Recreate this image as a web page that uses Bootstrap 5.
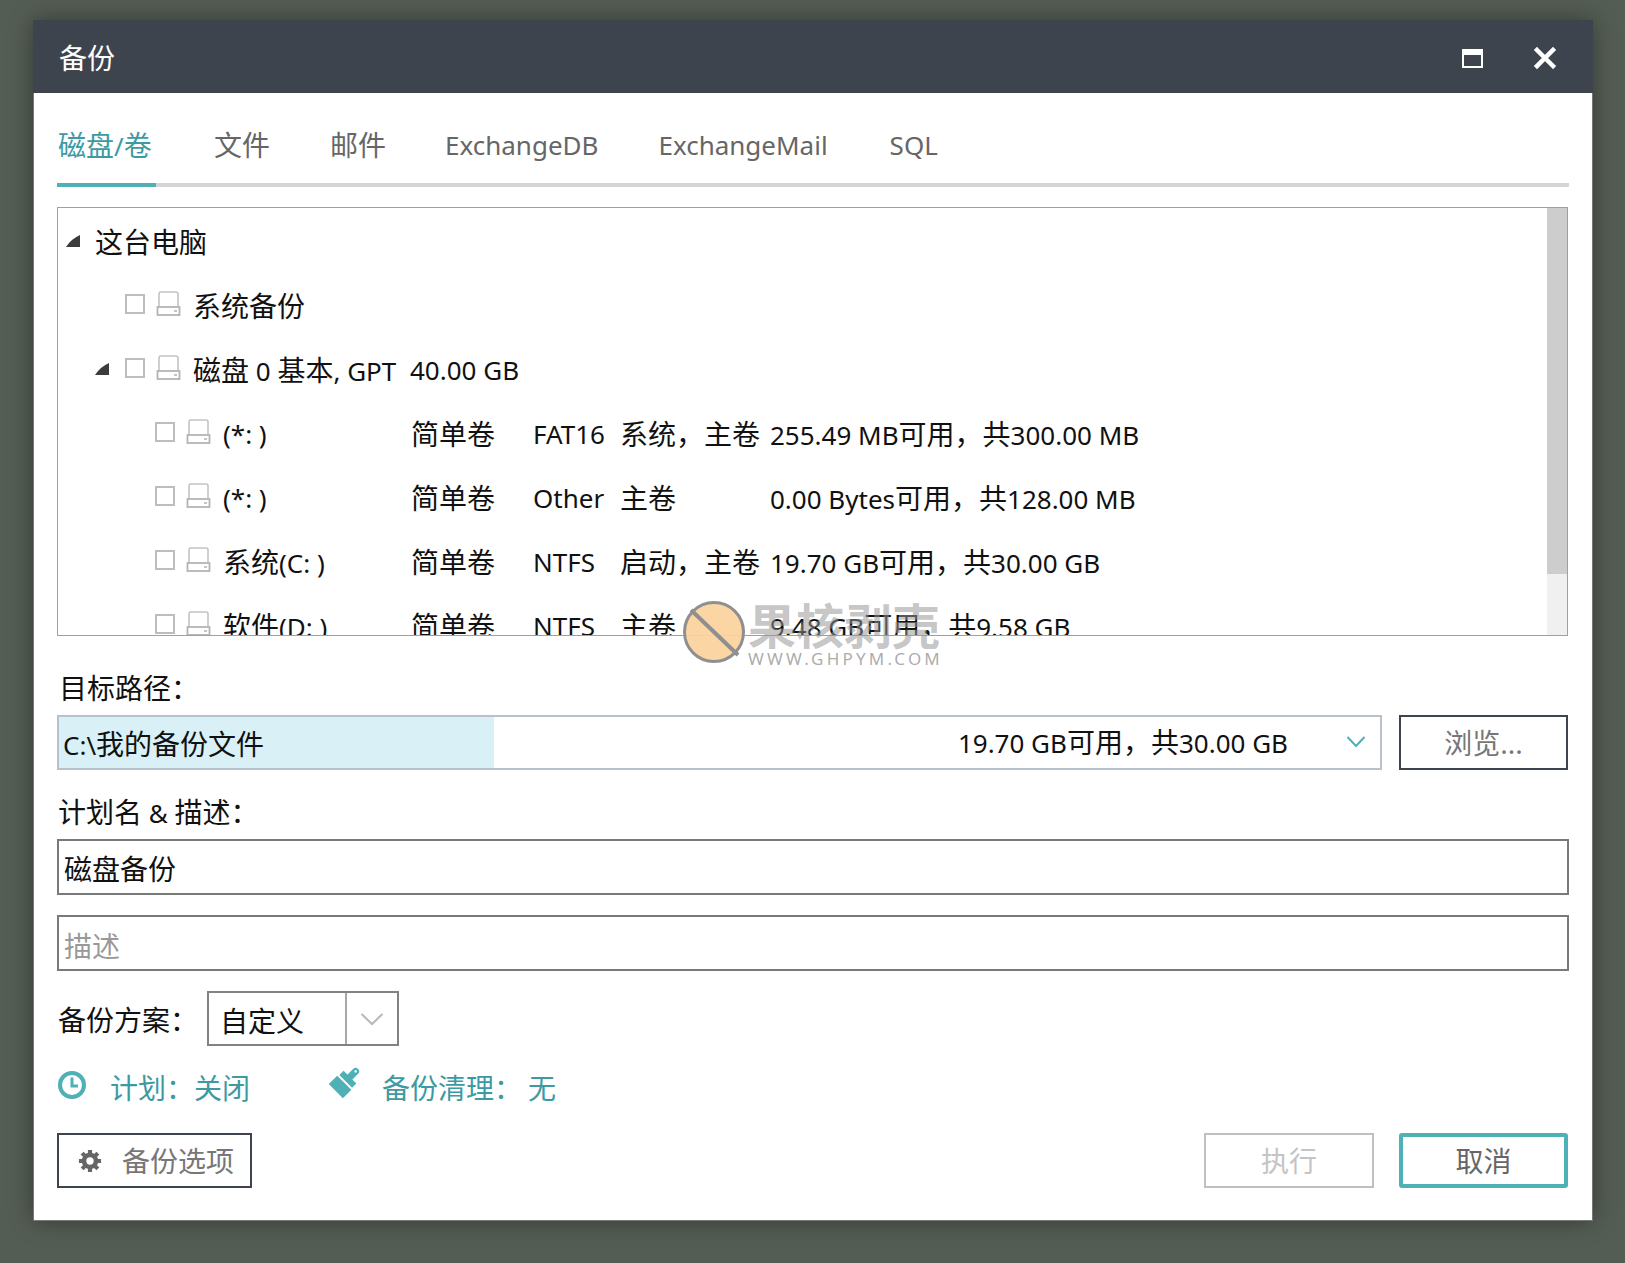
<!DOCTYPE html>
<html lang="zh-CN">
<head>
    <meta charset="UTF-8">
    <meta name="viewport" content="width=device-width, initial-scale=1.0">
    <title>备份</title>
    <link href="https://cdn.jsdelivr.net/npm/bootstrap@5.3.0/dist/css/bootstrap.min.css" rel="stylesheet">
    <style>
        html, body { height: 1263px; overflow: hidden; }
        body {
            background: #545d53;
            font-family: "Noto Sans", "Noto Sans CJK SC", sans-serif;
            font-size: 26px;
            color: #111;
            padding: 20px 0 0 33px;
        }
        .zh { font-size: 28px; }
        .bk-window {
            width: 1560px;
            height: 1201px;
            background: #fff;
            box-shadow: 0 0 22px rgba(0, 0, 0, .38);
        }
        .bk-title { height: 73px; background: #3d444d; color: #fff; padding: 3px 32px 0 26px; }
        .bk-title-btn { width: 32px; height: 32px; margin-left: 40px; }
        .bk-content { padding: 0 25px 0 24px; box-shadow: inset 1px 0 #777, inset -1px 0 #777, inset 0 -1px #777; }
        .bk-tabs { height: 94px; border-bottom: 4px solid #d5d5d5; margin-right: -1px; flex-wrap: nowrap; }
        .bk-tabs .nav-link {
            color: #666;
            padding: 0 1px;
            height: 94px;
            line-height: 104px;
            margin-right: 60px;
            white-space: nowrap;
        }
        .bk-tabs .nav-link.bk-tab-zh { margin-right: 57px; }
        .bk-tabs .nav-link.active { color: #3d9aa3; border-bottom: 4px solid #4fb0b5; width: 99px; margin-right: 57px; }
        .bk-tabs li:nth-child(2) .nav-link.bk-tab-zh { margin-right: 58px; }
        .bk-tabs li:nth-child(4) .nav-link { margin-right: 58px; }
        .bk-tree { height: 429px; margin-top: 20px; border: 1px solid #a0a0a0; overflow: hidden; }
        .bk-tree-list { min-width: 0; }
        .bk-scroll { width: 20px; background: #f0f0f0; }
        .bk-thumb { height: 366px; background: #cdcdcd; }
        .bk-row { height: 64px; white-space: nowrap; }
        .bk-row:first-child { margin-top: 2px; }
        .bk-arrow { width: 16px; height: 16px; flex: none; margin-top: -3px; }
        .bk-check.form-check-input {
            width: 20px; height: 20px; margin: -4px 0 0; flex: none;
            border: 2px solid #bdbdbd; border-radius: 0;
        }
        .bk-drive { width: 25px; height: 25px; flex: none; margin: -5px 12px 0 11px; }
        .bk-l0 { padding-left: 7px; }
        .bk-l0 .zh { margin-left: 14px; }
        .bk-l1 { padding-left: 67px; }
        .bk-l1b { padding-left: 36px; }
        .bk-l2 { padding-left: 97px; }
        .bk-gap1 { width: 15px; flex: none; }
        .bk-name { width: 188px; flex: none; }
        .bk-type { width: 122px; flex: none; }
        .bk-fs { width: 87px; flex: none; }
        .bk-flags { width: 150px; flex: none; }
        .bk-diskname { width: 217px; flex: none; }
        .bk-label { height: 79px; padding: 0 0 6px 2px; }
        .bk-label2 { height: 69px; padding: 0 0 6px 1px; }
        .bk-select { height: 55px; width: 1325px; border: 2px solid #b9c2cb; }
        .bk-select-hl { width: 435px; height: 100%; background: #d8f0f6; padding-left: 4px; line-height: 55px; }
        .bk-select-free { flex: 1; text-align: right; padding-right: 92px; line-height: 55px; }
        .bk-select-arrow { position: relative; width: 0; }
        .bk-btn.btn {
            border-radius: 0; font-size: 28px; padding: 0; height: 55px; width: 169px;
            border: 2px solid #3d444d; color: #777; background: #fff;
        }
        .bk-input.form-control {
            height: 56px; border-radius: 0; border: 2px solid #7a7a7a; font-size: 28px;
            padding: 2px 5px 0; color: #111; margin-right: -1px; width: calc(100% + 1px);
        }
        .bk-input.form-control:placeholder-shown { padding-top: 6px; }
        .bk-input.form-control::placeholder { color: #999; }
        .bk-scheme { margin-top: 20px; }
        .bk-scheme-label { margin: 3px 0 0 1px; }
        .bk-combo { width: 192px; height: 55px; border: 2px solid #828282; margin-left: 9px; }
        .bk-combo-text { width: 138px; border-right: 2px solid #a8a8a8; padding: 1px 0 0 11px; line-height: 55px; }
        .bk-links { height: 87px; padding-bottom: 4px; color: #3d9aa3; }
        .bk-links svg { margin-top: -6px; }
        .bk-btn-options.btn { width: 195px; padding-left: 19px; }
        .bk-btn-run.btn { border-color: #c0c0c0; color: #c4c4c4; margin-right: 25px; width: 170px; opacity: 1; }
        .bk-btn-cancel.btn { border: 4px solid #4fb0b5; border-radius: 3px; color: #666; }
        .bk-mark { position: absolute; left: 649px; top: 580px; pointer-events: none; }
        .bk-mark-text { margin: 3px 0 0 2px; }
        .bk-mark-cn { font-size: 48px; font-weight: 700; color: rgba(150, 150, 150, .55); line-height: 46px; }
        .bk-mark-en { font-size: 17px; color: rgba(150, 150, 150, .8); letter-spacing: 3.2px; line-height: 20px; }
    </style>
</head>
<body>

<div class="bk-window d-flex flex-column position-relative">
    <div class="bk-title d-flex align-items-center">
        <span class="zh flex-grow-1">备份</span>
        <svg class="bk-title-btn" viewBox="0 0 32 32"><rect x="6" y="8" width="19" height="17" fill="none" stroke="#fff" stroke-width="2"/><rect x="6" y="8" width="19" height="5" fill="#fff"/></svg>
        <svg class="bk-title-btn" viewBox="0 0 32 32"><path d="M8 8 L24 24 M24 8 L8 24" stroke="#fff" stroke-width="4.500" stroke-linecap="square" fill="none"/></svg>
    </div>

    <div class="bk-content d-flex flex-column flex-grow-1">
        <ul class="nav bk-tabs">
            <li class="nav-item"><a class="nav-link active" href="#"><span class="zh">磁盘</span>/<span class="zh">卷</span></a></li>
            <li class="nav-item"><a class="nav-link bk-tab-zh zh" href="#">文件</a></li>
            <li class="nav-item"><a class="nav-link bk-tab-zh zh" href="#">邮件</a></li>
            <li class="nav-item"><a class="nav-link" href="#">ExchangeDB</a></li>
            <li class="nav-item"><a class="nav-link" href="#">ExchangeMail</a></li>
            <li class="nav-item"><a class="nav-link" href="#">SQL</a></li>
        </ul>

        <div class="bk-tree d-flex">
            <div class="bk-tree-list flex-grow-1" id="treeList"></div>
            <div class="bk-scroll flex-shrink-0"><div class="bk-thumb"></div></div>
        </div>

        <div class="bk-label d-flex align-items-end"><span class="zh">目标路径：</span></div>
        <div class="d-flex justify-content-between">
            <div class="bk-select d-flex align-items-center">
                <div class="bk-select-hl">C:\<span class="zh">我的备份文件</span></div>
                <div class="bk-select-free">19.70 GB<span class="zh">可用，共</span>30.00 GB</div>
                <div class="bk-select-arrow">
                    <svg class="position-absolute" style="right:14px;top:-8px" width="20" height="14" viewBox="0 0 20 14"><path d="M1.500 2 L10 11 L18.500 2" fill="none" stroke="#4fb0b5" stroke-width="2"/></svg>
                </div>
            </div>
            <button class="bk-btn btn" type="button">浏览...</button>
        </div>

        <div class="bk-label2 d-flex align-items-end"><span><span class="zh">计划名</span> &amp; <span class="zh">描述：</span></span></div>
        <input class="bk-input form-control" type="text" value="磁盘备份">
        <input class="bk-input form-control" style="margin-top:20px" type="text" placeholder="描述">

        <div class="bk-scheme d-flex align-items-center">
            <span class="bk-scheme-label zh">备份方案：</span>
            <div class="bk-combo d-flex">
                <div class="bk-combo-text zh">自定义</div>
                <div class="flex-grow-1 d-flex align-items-center justify-content-center">
                    <svg width="24" height="14" viewBox="0 0 24 14"><path d="M1.500 2 L12 12 L22.500 2" fill="none" stroke="#b8b8b8" stroke-width="2"/></svg>
                </div>
            </div>
        </div>

        <div class="bk-links d-flex align-items-center">
            <svg width="30" height="30" viewBox="0 0 30 30"><circle cx="15" cy="15" r="12" fill="none" stroke="#4fb0b5" stroke-width="4"/><path d="M15 7.500 V16 H21" fill="none" stroke="#4fb0b5" stroke-width="3"/></svg>
            <span class="zh" style="margin-left:23px;width:219px">计划：关闭</span>
            <svg width="32" height="32" viewBox="0 0 32 32" style="overflow:visible"><g transform="translate(0 -3) rotate(45 16 16)"><rect x="6" y="17" width="20" height="12" fill="#4fb0b5"/><rect x="7" y="9" width="18" height="6" fill="#4fb0b5"/><path d="M12.500 10 V1 A3.500 3.500 0 0 1 19.500 1 V10 Z" fill="#4fb0b5"/><circle cx="16" cy="1" r="1.300" fill="#fff"/></g></svg>
            <span class="zh" style="margin-left:21px;width:146px">备份清理：</span>
            <span class="zh">无</span>
        </div>

        <div class="d-flex align-items-start">
            <button class="bk-btn bk-btn-options btn d-flex align-items-center" type="button">
                <svg style="margin-right:20px" width="24" height="24" viewBox="0 0 26 26"><path d="M13 1 V25 M1 13 H25 M4.500 4.500 L21.500 21.500 M21.500 4.500 L4.500 21.500" stroke="#666" stroke-width="4.500"/><circle cx="13" cy="13" r="9" fill="#666"/><circle cx="13" cy="13" r="4" fill="#fff"/></svg>
                备份选项
            </button>
            <div class="flex-grow-1"></div>
            <button class="bk-btn bk-btn-run btn" type="button" disabled>执行</button>
            <button class="bk-btn bk-btn-cancel btn" type="button">取消</button>
        </div>
    </div>

    <div class="bk-mark d-flex align-items-start">
        <svg width="64" height="64" viewBox="0 0 64 64"><circle cx="32" cy="32" r="29.500" fill="#fbd19b" fill-opacity=".92" stroke="#8f8f8f" stroke-width="3"/><path d="M9 10 L56 55" stroke="#8f8f8f" stroke-width="4"/></svg>
        <div class="bk-mark-text">
            <div class="bk-mark-cn">果核剥壳</div>
            <div class="bk-mark-en">WWW.GHPYM.COM</div>
        </div>
    </div>
</div>

<script src="https://cdn.jsdelivr.net/npm/bootstrap@5.3.0/dist/js/bootstrap.bundle.min.js"></script>
<script>
    const arrow = '<svg class="bk-arrow" viewBox="0 0 16 16"><path d="M15 2 V14 H1 Q6 6 15 2 Z" fill="#3c3c3c"/></svg>';
    const check = '<input class="bk-check form-check-input" type="checkbox">';
    const drive = '<svg class="bk-drive" viewBox="0 0 25 25"><path d="M3 17 V3 Q3 1 5 1 H20 Q22 1 22 3 V17" fill="none" stroke="#c4c4c4" stroke-width="1.600"/><rect x="1.500" y="16" width="22" height="8" fill="#fff" stroke="#b4b4b4" stroke-width="1.800"/><path d="M18 20 H21" stroke="#c4c4c4" stroke-width="2"/></svg>';

    const partitions = [
        ['(*: )', 'FAT16', '<span class="zh">系统，主卷</span>', '255.49 MB<span class="zh">可用，共</span>300.00 MB'],
        ['(*: )', 'Other', '<span class="zh">主卷</span>', '0.00 Bytes<span class="zh">可用，共</span>128.00 MB'],
        ['<span class="zh">系统</span>(C: )', 'NTFS', '<span class="zh">启动，主卷</span>', '19.70 GB<span class="zh">可用，共</span>30.00 GB'],
        ['<span class="zh">软件</span>(D: )', 'NTFS', '<span class="zh">主卷</span>', '9.48 GB<span class="zh">可用，共</span>9.58 GB']
    ];

    let html = `
        <div class="bk-row bk-l0 d-flex align-items-center">${arrow}<span class="zh">这台电脑</span></div>
        <div class="bk-row bk-l1 d-flex align-items-center">${check}${drive}<span class="zh">系统备份</span></div>
        <div class="bk-row bk-l1b d-flex align-items-center">${arrow}<span class="bk-gap1"></span>${check}${drive}<span class="bk-diskname"><span class="zh">磁盘</span> 0 <span class="zh">基本</span>, GPT</span><span>40.00 GB</span></div>`;
    partitions.forEach(p => {
        html += `
        <div class="bk-row bk-l2 d-flex align-items-center">${check}${drive}<span class="bk-name">${p[0]}</span><span class="bk-type zh">简单卷</span><span class="bk-fs">${p[1]}</span><span class="bk-flags">${p[2]}</span><span>${p[3]}</span></div>`;
    });
    document.getElementById('treeList').innerHTML = html;
</script>
</body>
</html>
